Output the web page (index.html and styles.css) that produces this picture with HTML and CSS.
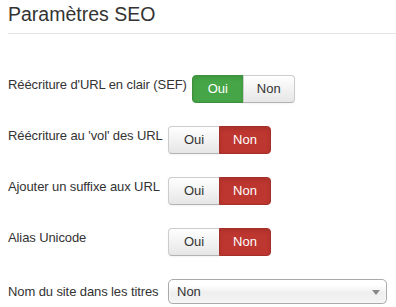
FILE: index.html
```html
<!DOCTYPE html>
<html lang="fr">
<head>
    <meta charset="UTF-8">
    <meta name="viewport" content="width=device-width, initial-scale=1.0">
    <title>Paramètres SEO</title>
    <link rel="stylesheet" href="styles.css">
</head>
<body>
    <div class="container">
        <h2 class="title">Paramètres SEO</h2>

        <div class="form">
            <div class="control-group">
                <label class="control-label">Réécriture d'URL en clair (SEF)</label>
                <div class="btn-group">
                    <button class="btn btn-success">Oui</button>
                    <button class="btn">Non</button>
                </div>
            </div>

            <div class="control-group">
                <label class="control-label">Réécriture au 'vol' des URL</label>
                <div class="btn-group">
                    <button class="btn">Oui</button>
                    <button class="btn btn-danger">Non</button>
                </div>
            </div>

            <div class="control-group">
                <label class="control-label">Ajouter un suffixe aux URL</label>
                <div class="btn-group">
                    <button class="btn">Oui</button>
                    <button class="btn btn-danger">Non</button>
                </div>
            </div>

            <div class="control-group">
                <label class="control-label">Alias Unicode</label>
                <div class="btn-group">
                    <button class="btn">Oui</button>
                    <button class="btn btn-danger">Non</button>
                </div>
            </div>

            <div class="control-group control-group-select">
                <label class="control-label">Nom du site dans les titres</label>
                <div class="select">
                    <span>Non</span>
                    <span class="select-arrow"></span>
                </div>
            </div>
        </div>
    </div>
</body>
</html>
```

FILE: styles.css
```css
:root {
    --text-color: #333333;
    --border-color: #e5e5e5;
    --success-color: #46a546;
    --danger-color: #bd362f;
}

* {
    margin: 0;
    padding: 0;
    box-sizing: border-box;
    font-family: "Liberation Sans", Arial, sans-serif;
}

body {
    background-color: #ffffff;
    color: var(--text-color);
    font-size: 13px;
    line-height: 18px;
}

.container {
    padding-left: 8px;
}

.title {
    font-size: 19.5px;
    font-weight: 400;
    line-height: 24px;
    padding: 2px 0 7px;
    border-bottom: 1px solid var(--border-color);
}

.form {
    margin-top: 41px;
}

.control-group {
    display: flex;
    align-items: flex-start;
    margin-bottom: 19px;
}

.control-group:last-child {
    margin-bottom: 0;
}

.control-group-select {
    align-items: baseline;
}

.control-label {
    min-width: 160px;
    padding-top: 1px;
    padding-right: 5px;
    letter-spacing: -0.1px;
}

.btn-group {
    display: flex;
    margin-bottom: 4px;
}

.btn {
    width: 52px;
    height: 28px;
    padding: 4px 0;
    font-size: 13px;
    line-height: 18px;
    text-align: center;
    color: var(--text-color);
    background: linear-gradient(#ffffff, #e6e6e6);
    border: 1px solid #cccccc;
    border-bottom-color: #b3b3b3;
    box-shadow: inset 0 1px 0 rgba(255, 255, 255, 0.2), 0 1px 2px rgba(0, 0, 0, 0.05);
    cursor: pointer;
}

.btn:first-child {
    border-radius: 4px 0 0 4px;
}

.btn:last-child {
    border-radius: 0 4px 4px 0;
    margin-left: -1px;
}

.btn-success {
    color: #ffffff;
    background: var(--success-color);
    border-color: #3d8f3d;
    box-shadow: inset 0 2px 4px rgba(0, 0, 0, 0.1);
}

.btn-danger {
    color: #ffffff;
    background: var(--danger-color);
    border-color: #a5302a;
    box-shadow: inset 0 2px 4px rgba(0, 0, 0, 0.1);
}

.select {
    position: relative;
    width: 219px;
    height: 25px;
    padding: 1px 0 0 8px;
    line-height: 22px;
    border: 1px solid #aaaaaa;
    border-radius: 5px;
    background: linear-gradient(#ffffff 20%, #f2f2f2 50%, #eeeeee 52%, #f4f4f4);
    box-shadow: 0 0 3px #ffffff inset, 0 1px 1px rgba(0, 0, 0, 0.1);
}

.select-arrow {
    position: absolute;
    right: 6px;
    top: 10px;
    width: 0;
    height: 0;
    border-left: 4px solid transparent;
    border-right: 4px solid transparent;
    border-top: 5px solid #888888;
}
```
